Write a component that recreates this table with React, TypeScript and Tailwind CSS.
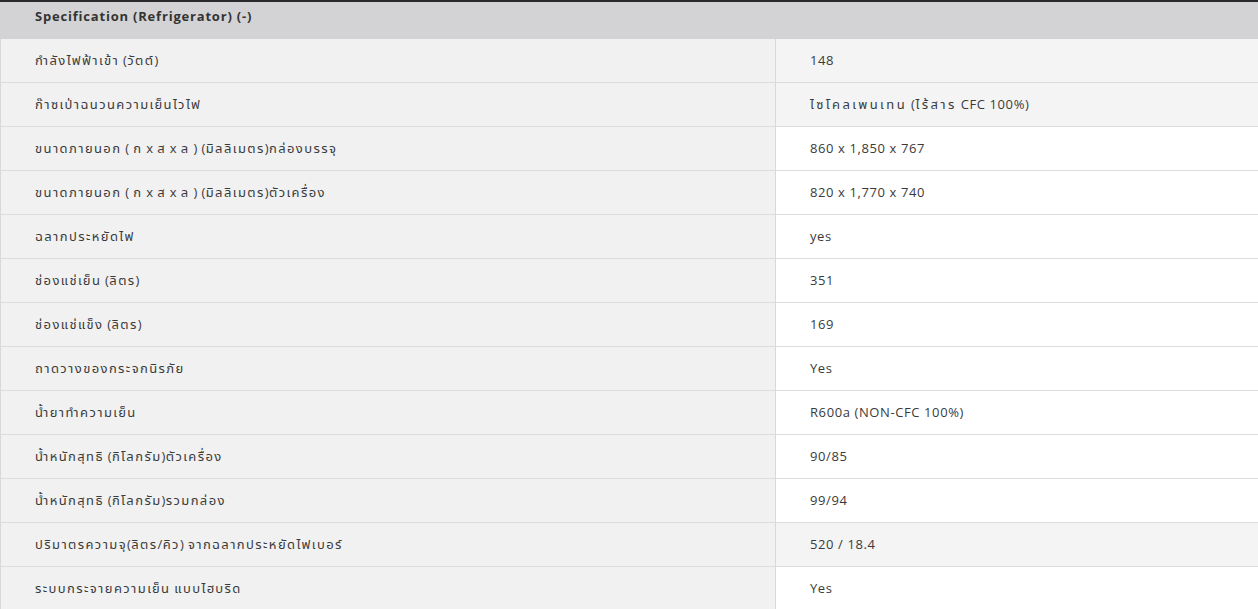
import React from "react";

const rows: [string, string, boolean][] = [
  ["กำลังไฟฟ้าเข้า (วัตต์)", "148", true],
  ["ก๊าซเป่าฉนวนความเย็นไวไฟ", "ไซโคลเพนเทน (ไร้สาร CFC 100%)", true],
  ["ขนาดภายนอก ( ก x ส x ล ) (มิลลิเมตร)กล่องบรรจุ", "860 x 1,850 x 767", false],
  ["ขนาดภายนอก ( ก x ส x ล ) (มิลลิเมตร)ตัวเครื่อง", "820 x 1,770 x 740", false],
  ["ฉลากประหยัดไฟ", "yes", false],
  ["ช่องแช่เย็น (ลิตร)", "351", false],
  ["ช่องแช่แข็ง (ลิตร)", "169", false],
  ["ถาดวางของกระจกนิรภัย", "Yes", false],
  ["น้ำยาทำความเย็น", "R600a (NON-CFC 100%)", false],
  ["น้ำหนักสุทธิ (กิโลกรัม)ตัวเครื่อง", "90/85", false],
  ["น้ำหนักสุทธิ (กิโลกรัม)รวมกล่อง", "99/94", false],
  ["ปริมาตรความจุ(ลิตร/คิว) จากฉลากประหยัดไฟเบอร์", "520 / 18.4", true],
  ["ระบบกระจายความเย็น แบบไฮบริด", "Yes", false],
];

function Txt({ s, value }: { s: string; value?: boolean }) {
  const parts = s.split(/([\u0E00-\u0E7F]+)/).filter((p) => p.length > 0);
  return (
    <span>
      {parts.map((p, i) =>
        /[\u0E00-\u0E7F]/.test(p) ? (
          <span key={i} className={value ? "tracking-[2.4px]" : "tracking-[1.4px]"}>
            {p}
          </span>
        ) : (
          <span key={i} className={value ? "tracking-[0.6px]" : "tracking-[0.4px]"}>
            {p}
          </span>
        )
      )}
    </span>
  );
}

export default function App() {
  return (
    <div
      className="w-[1258px] h-[609px] overflow-hidden bg-white text-[13px] text-[#3a3a3a]"
      style={{ fontFamily: '"Open Sans", Tahoma, "Noto Sans", "Noto Sans Thai", sans-serif' }}
    >
      <div className="border-t-2 border-[#2a2a2a] bg-[#d3d3d5] h-[39px] pt-[5px] pl-[35px] font-bold text-[#333] tracking-[0.8px]">
        Specification (Refrigerator) (-)
      </div>
      {rows.map(([k, v, gray], i) => (
        <div key={i} className="flex h-[44px] border-b border-[#dcdcdc]">
          <div className="w-[776px] shrink-0 bg-[#f1f1f1] border-l border-r border-[#d8d8d8] flex items-center pl-[34px]">
            <Txt s={k} />
          </div>
          <div
            className={
              "flex-1 flex items-center pl-[34px] " + (gray ? "bg-[#f4f4f4]" : "bg-white")
            }
          >
            <Txt s={v} value />
          </div>
        </div>
      ))}
    </div>
  );
}
